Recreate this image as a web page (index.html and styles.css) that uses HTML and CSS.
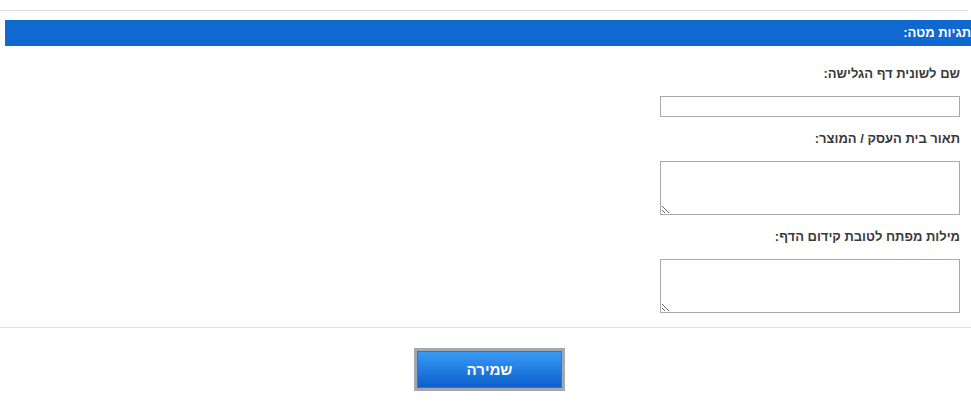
FILE: index.html
```html
<!DOCTYPE html>
<html lang="he" dir="rtl">
<head>
  <meta charset="UTF-8">
  <meta name="viewport" content="width=device-width, initial-scale=1.0">
  <title>תגיות מטה</title>
  <link rel="stylesheet" href="styles.css">
</head>
<body>
  <div class="page">
    <hr class="divider top">

    <div class="section-title">תגיות מטה:</div>

    <div class="fields">
      <label for="tab-name">שם לשונית דף הגלישה:</label>
      <input type="text" id="tab-name" />

      <label for="description">תאור בית העסק / המוצר:</label>
      <textarea id="description"></textarea>

      <label for="keywords">מילות מפתח לטובת קידום הדף:</label>
      <textarea id="keywords"></textarea>
    </div>

    <hr class="divider">

    <div class="actions">
      <button id="save-button">שמירה</button>
    </div>
  </div>
</body>
</html>
```

FILE: styles.css
```css
* {
  box-sizing: border-box;
  margin: 0;
  padding: 0;
}
body {
  font-family: 'Liberation Sans', Arial, sans-serif;
  background-color: #fff;
  color: #3a3a3a;
  overflow: hidden;
}
.page {
  padding-top: 10px;
}
.divider {
  border: none;
  border-top: 1px solid #dedede;
  height: 0;
}
.divider.top {
  margin-right: 3px;
}
.section-title {
  background-color: #1068d0;
  color: #fff;
  font-size: 13px;
  font-weight: bold;
  height: 26px;
  line-height: 26px;
  margin-top: 9px;
  margin-left: 5px;
  white-space: nowrap;
}
.fields {
  display: flex;
  flex-direction: column;
  align-items: flex-start;
  padding: 20px 11px 14px 0;
}
label {
  display: block;
  font-size: 13px;
  font-weight: bold;
  line-height: 16px;
  color: #3a3a3a;
  margin-bottom: 14px;
}
input[type="text"], textarea {
  width: 300px;
  border: 1px solid #aaa;
  font-family: inherit;
  font-size: 13px;
  margin-bottom: 14px;
}
input[type="text"] {
  height: 21px;
}
textarea {
  height: 54px;
}
.fields textarea:last-child {
  margin-bottom: 0;
}
.actions {
  display: flex;
  justify-content: center;
  padding-top: 20px;
  padding-left: 8px;
}
button {
  width: 151px;
  height: 43px;
  border: 3px solid #a3a8ae;
  outline: 1px solid #4f6f98;
  outline-offset: -4px;
  background: linear-gradient(to bottom, #3a9cf6, #0b5ecb);
  color: #fff;
  font-family: inherit;
  font-size: 15px;
  font-weight: bold;
  cursor: pointer;
}
button:hover {
  background: linear-gradient(to bottom, #4aa6f8, #0a55b8);
}
```
